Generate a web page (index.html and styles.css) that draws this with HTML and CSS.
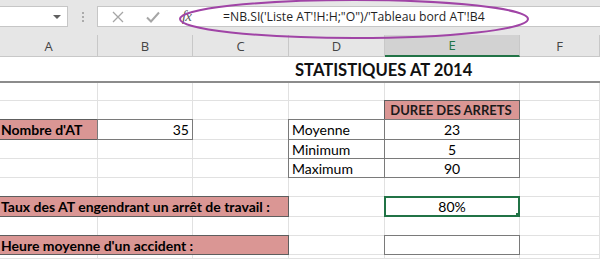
FILE: index.html
```html
<!DOCTYPE html>
<html lang="fr">
<head>
    <meta charset="UTF-8">
    <title>Statistiques AT 2014</title>
    <link rel="stylesheet" href="styles.css">
</head>
<body>
    <div class="app">
        <div class="toolbar">
            <div class="namebox"><span class="caret"></span></div>
            <div class="grip"><i></i><i></i><i></i></div>
            <div class="formula">
                <span class="tool">
                    <svg width="12" height="12" viewBox="0 0 12 12"><path d="M1 1 L11 11 M11 1 L1 11" stroke="#a6a6a6" stroke-width="1.3" fill="none"/></svg>
                </span>
                <span class="tool">
                    <svg width="14" height="12" viewBox="0 0 14 12"><path d="M1 6.5 L5 10.5 L13 1.5" stroke="#a6a6a6" stroke-width="2" fill="none"/></svg>
                </span>
                <span class="fx">fx</span>
                <span class="formula-text">=NB.SI('Liste AT'!H:H;"O")/'Tableau bord AT'!B4</span>
            </div>
        </div>

        <div class="sheet">
            <!-- column headers -->
            <div class="col-head">A</div>
            <div class="col-head">B</div>
            <div class="col-head">C</div>
            <div class="col-head">D</div>
            <div class="col-head selected">E</div>
            <div class="col-head">F</div>

            <!-- row 1 -->
            <div class="title-row">STATISTIQUES AT 2014</div>

            <!-- row 2 -->
            <div class="cell"></div><div class="cell"></div><div class="cell"></div>
            <div class="cell"></div><div class="cell"></div><div class="cell"></div>

            <!-- row 3 -->
            <div class="cell"></div><div class="cell"></div><div class="cell"></div>
            <div class="cell"></div>
            <div class="cell boxed label head">DUREE DES ARRETS</div>
            <div class="cell"></div>

            <!-- row 4 -->
            <div class="cell boxed label">Nombre d'AT</div>
            <div class="cell boxed right">35</div>
            <div class="cell"></div>
            <div class="cell boxed">Moyenne</div>
            <div class="cell boxed center">23</div>
            <div class="cell"></div>

            <!-- row 5 -->
            <div class="cell"></div><div class="cell"></div><div class="cell"></div>
            <div class="cell boxed">Minimum</div>
            <div class="cell boxed center">5</div>
            <div class="cell"></div>

            <!-- row 6 -->
            <div class="cell"></div><div class="cell"></div><div class="cell"></div>
            <div class="cell boxed">Maximum</div>
            <div class="cell boxed center">90</div>
            <div class="cell"></div>

            <!-- row 7 -->
            <div class="cell"></div><div class="cell"></div><div class="cell"></div>
            <div class="cell"></div><div class="cell"></div><div class="cell"></div>

            <!-- row 8 -->
            <div class="cell boxed label span3">Taux des AT engendrant un arrêt de travail :</div>
            <div class="cell"></div>
            <div class="cell active center">80%</div>
            <div class="cell"></div>

            <!-- row 9 -->
            <div class="cell"></div><div class="cell"></div><div class="cell"></div>
            <div class="cell"></div><div class="cell"></div><div class="cell"></div>

            <!-- row 10 -->
            <div class="cell boxed label span3">Heure moyenne d'un accident :</div>
            <div class="cell"></div>
            <div class="cell boxed"></div>
            <div class="cell"></div>

            <!-- row 11 -->
            <div class="cell"></div><div class="cell"></div><div class="cell"></div>
            <div class="cell"></div><div class="cell"></div><div class="cell"></div>
        </div>

        <svg class="highlight" width="600" height="60" viewBox="0 0 600 60">
            <ellipse cx="354" cy="19" rx="174" ry="19" fill="none" stroke="#a044a6" stroke-width="2"/>
        </svg>
    </div>
</body>
</html>
```

FILE: styles.css
```css
/* Page */
body {
    margin: 0;
    background-color: #FFFFFF;
    font-family: 'Lato', 'Liberation Sans', sans-serif;
    color: #000000;
}

.app {
    position: relative;
    width: 600px;
    height: 259px;
    overflow: hidden;
}

/* Formula bar */
.toolbar {
    display: flex;
    align-items: center;
    height: 35px;
    padding-bottom: 2px;
    box-sizing: border-box;
    background-color: #E6E6E6;
}

.namebox {
    display: flex;
    align-items: center;
    justify-content: flex-end;
    width: 68px;
    height: 21px;
    box-sizing: border-box;
    padding-right: 6px;
    background-color: #FFFFFF;
    border: 1px solid #C6C6C6;
    border-left: none;
}

.caret {
    width: 0;
    height: 0;
    border-left: 4px solid transparent;
    border-right: 4px solid transparent;
    border-top: 4px solid #5F5F5F;
}

.grip {
    display: flex;
    flex-direction: column;
    gap: 2px;
    margin: 0 13px 0 14px;
}

.grip i {
    width: 2px;
    height: 2px;
    background-color: #ABABAB;
}

.formula {
    flex: 1;
    display: flex;
    align-items: center;
    height: 21px;
    box-sizing: border-box;
    padding-left: 14px;
    background-color: #FFFFFF;
    border: 1px solid #C6C6C6;
    border-right: none;
}

.tool {
    display: flex;
    width: 34px;
}

.fx {
    width: 43px;
    padding-left: 2px;
    box-sizing: border-box;
    font-family: 'Liberation Serif', serif;
    font-style: italic;
    font-size: 15px;
    color: #5A5A5A;
    letter-spacing: -1px;
}

.formula-text {
    font-family: 'Open Sans', sans-serif;
    font-size: 12.2px;
    color: #1F1F1F;
    white-space: nowrap;
}

/* Sheet grid */
.sheet {
    display: grid;
    grid-template-columns: 98px 95px 96px 96px 135px 1fr;
    grid-template-rows: 22px 26px 18px 19px 20px 19px 19px 19px 20px 19px 19px 1fr;
    height: 224px;
}

.col-head {
    display: flex;
    align-items: center;
    justify-content: center;
    background-color: #E6E6E6;
    border-right: 1px solid #C8C8C8;
    border-bottom: 1px solid #C8C8C8;
    font-family: 'Open Sans', sans-serif;
    font-size: 13px;
    color: #444444;
}

.col-head.selected {
    background-color: #D2D2D2;
    color: #217346;
    border-bottom: 2px solid #217346;
}

.title-row {
    grid-column: 1 / -1;
    padding-left: 295px;
    border-bottom: 2px solid #8C8C8C;
    font-size: 16.6px;
    font-weight: bold;
    line-height: 26px;
    color: #111111;
}

.cell {
    display: flex;
    align-items: center;
    padding: 0 3px;
    border-right: 1px solid #E1E1E1;
    border-bottom: 1px solid #E1E1E1;
    font-size: 14px;
    white-space: nowrap;
    overflow: hidden;
}

.cell.boxed {
    margin: -1px 0 0 -1px;
    border: 1px solid #7A7A7A;
    position: relative;
}

.cell.label {
    background-color: #DA9694;
    font-weight: bold;
    padding-left: 1px;
    border-color: #5E5E5E;
}

.cell.head {
    justify-content: center;
    font-size: 13px;
    color: #1A1A1A;
}

.cell.span3 {
    grid-column: span 3;
}

.center {
    justify-content: center;
}

.right {
    justify-content: flex-end;
}

.cell.active {
    position: relative;
    margin: -1px 0 0 -1px;
    border: 2px solid #217346;
}

.cell.active::after {
    content: "";
    position: absolute;
    right: -4px;
    bottom: -4px;
    width: 5px;
    height: 5px;
    background-color: #217346;
    border: 1px solid #FFFFFF;
}

/* Hand-drawn highlight round the formula */
.highlight {
    position: absolute;
    left: 0;
    top: 0;
    pointer-events: none;
}
```
